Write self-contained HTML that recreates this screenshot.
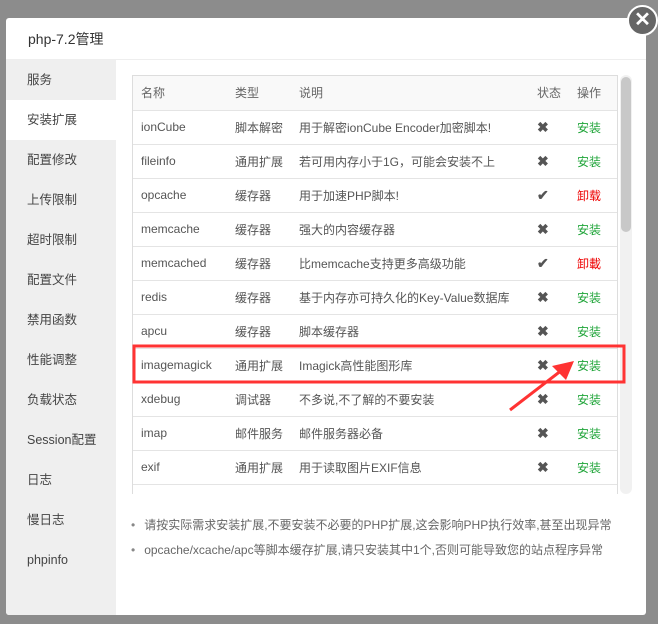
<!DOCTYPE html>
<html><head><meta charset="utf-8"><style>
*{margin:0;padding:0;box-sizing:border-box}
body{width:658px;height:624px;background:#8c8c8c;position:relative;overflow:hidden;font-family:"Liberation Sans","Noto Sans CJK SC",sans-serif;font-size:12px;color:#555}
.modal{position:absolute;left:6px;top:18px;width:640px;height:597px;background:#fff;border-radius:3px;overflow:hidden}
.title{height:42px;line-height:42px;padding-left:22px;font-size:14px;color:#333;border-bottom:1px solid #eee}
.side{position:absolute;left:0;top:42px;width:110px;bottom:0;background:#efefef}
.side div{height:40px;line-height:40px;padding-left:21px;font-size:12.5px;color:#444}
.side div.on{background:#fff}
.tw{position:absolute;left:126px;top:57px;width:486px;height:419px;overflow:hidden;border:1px solid #ddd;border-bottom:none}
table{border-collapse:collapse;width:100%}
td,th{height:34px;border-bottom:1px solid #e4e4e4;text-align:left;font-weight:normal;padding-left:8px;white-space:nowrap;color:#555}
th{background:#f9f9f9;color:#666}
.g{color:#20a53a}.r{color:#e00}
.x{font-size:14px;color:#555;font-weight:bold}
.sb{position:absolute;left:614px;top:57px;width:12px;height:419px;background:#f1f1f1;border-radius:6px}
.sb i{position:absolute;left:1px;top:2px;width:10px;height:155px;background:#c8c8c8;border-radius:5px}
ul{position:absolute;left:125px;top:495px;list-style:none;font-size:12px;color:#666}
ul li{height:25px;line-height:25px}
ul li:before{content:"•";margin-right:9px;color:#888}
.close{position:absolute;left:627px;top:5px;width:31px;height:31px;border-radius:50%;background:#666;border:2px solid #fff;color:#fff;font-size:20px;font-weight:bold;text-align:center;line-height:27px}
</style></head><body>
<div class="modal">
<div class="title">php-7.2管理</div>
<div class="side">
<div>服务</div><div class="on">安装扩展</div><div>配置修改</div><div>上传限制</div><div>超时限制</div><div>配置文件</div><div>禁用函数</div><div>性能调整</div><div>负载状态</div><div>Session配置</div><div>日志</div><div>慢日志</div><div>phpinfo</div>
</div>
<div class="tw"><table>
<tr><th style="width:94px">名称</th><th style="width:64px">类型</th><th>说明</th><th style="width:40px">状态</th><th style="width:48px">操作</th></tr>
<tr><td>ionCube</td><td>脚本解密</td><td>用于解密ionCube Encoder加密脚本!</td><td class="x">✖</td><td class="g">安装</td></tr>
<tr><td>fileinfo</td><td>通用扩展</td><td>若可用内存小于1G，可能会安装不上</td><td class="x">✖</td><td class="g">安装</td></tr>
<tr><td>opcache</td><td>缓存器</td><td>用于加速PHP脚本!</td><td class="x">✔</td><td class="r">卸载</td></tr>
<tr><td>memcache</td><td>缓存器</td><td>强大的内容缓存器</td><td class="x">✖</td><td class="g">安装</td></tr>
<tr><td>memcached</td><td>缓存器</td><td>比memcache支持更多高级功能</td><td class="x">✔</td><td class="r">卸載</td></tr>
<tr><td>redis</td><td>缓存器</td><td>基于内存亦可持久化的Key-Value数据库</td><td class="x">✖</td><td class="g">安装</td></tr>
<tr><td>apcu</td><td>缓存器</td><td>脚本缓存器</td><td class="x">✖</td><td class="g">安装</td></tr>
<tr><td>imagemagick</td><td>通用扩展</td><td>Imagick高性能图形库</td><td class="x">✖</td><td class="g">安装</td></tr>
<tr><td>xdebug</td><td>调试器</td><td>不多说,不了解的不要安装</td><td class="x">✖</td><td class="g">安装</td></tr>
<tr><td>imap</td><td>邮件服务</td><td>邮件服务器必备</td><td class="x">✖</td><td class="g">安装</td></tr>
<tr><td>exif</td><td>通用扩展</td><td>用于读取图片EXIF信息</td><td class="x">✖</td><td class="g">安装</td></tr>
<tr><td>intl</td><td>通用扩展</td><td></td><td></td><td></td></tr>
</table></div>
<div class="sb"><i></i></div>
<ul><li>请按实际需求安装扩展,不要安装不必要的PHP扩展,这会影响PHP执行效率,甚至出现异常</li><li>opcache/xcache/apc等脚本缓存扩展,请只安装其中1个,否则可能导致您的站点程序异常</li></ul>
</div>
<div class="close">✕</div>
<svg style="position:absolute;left:0;top:0" width="658" height="624">
<rect x="134" y="346" width="490" height="36" fill="none" stroke="#f33" stroke-width="3"/>
<line x1="510" y1="410" x2="562" y2="370" stroke="#f33" stroke-width="3"/>
<polygon points="574,361 552,366 566,380" fill="#f33"/>
</svg>
</body></html>
